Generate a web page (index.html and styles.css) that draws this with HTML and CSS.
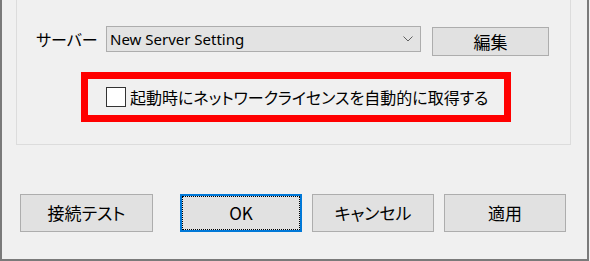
FILE: index.html
```html
<!DOCTYPE html>
<html>
<head>
    <title>ライセンス設定</title>
    <link rel="stylesheet" href="styles.css">
</head>
<body>
    <div class="dialog">
        <!-- server group (top edge is cut off in the capture) -->
        <div class="group">
            <div class="server-row">
                <span class="server-label">サーバー</span>
                <div class="combo">
                    <span class="combo-text">New Server Setting</span>
                    <svg class="combo-arrow" width="10" height="6" viewBox="0 0 10 6">
                        <polyline points="0.5,0.5 5,5 9.5,0.5" fill="none" stroke="#606060" stroke-width="1"/>
                    </svg>
                </div>
                <button type="button" class="btn btn-edit">編集</button>
            </div>

            <div class="highlight">
                <label class="check">
                    <span class="check-box"></span>
                    <span class="check-text">起動時にネットワークライセンスを自動的に取得する</span>
                </label>
            </div>
        </div>

        <!-- dialog buttons -->
        <div class="actions">
            <button type="button" class="btn btn-test">接続テスト</button>
            <button type="button" class="btn btn-ok">OK</button>
            <button type="button" class="btn">キャンセル</button>
            <button type="button" class="btn">適用</button>
        </div>
    </div>
</body>
</html>
```

FILE: styles.css
```css
body {
    margin: 0;
    background-color: #f0f0f0;
    font-family: "Noto Sans CJK JP", sans-serif;
    font-size: 16px;
    font-feature-settings: "palt";
    line-height: 22px;
    color: #000;
}

.dialog {
    width: 589px;
    height: 261px;
    box-sizing: border-box;
    border: 2px solid #7a7a7a;
    border-top: 0;
}

.group {
    width: 555px;
    height: 145px;
    margin-left: 14px;
    box-sizing: border-box;
    border: 1px solid #dcdcdc;
    border-top: 0;
}

.server-row {
    display: flex;
    align-items: flex-start;
    padding: 26px 0 0 19px;
}

.server-label {
    width: 60px;
    height: 26px;
    line-height: 26px;
    margin-right: 10px;
    white-space: nowrap;
}

.combo {
    width: 315px;
    height: 26px;
    box-sizing: border-box;
    border: 1px solid #adadad;
    background-color: #e3e3e3;
    display: flex;
    align-items: center;
    justify-content: space-between;
    padding: 0 7px 0 3px;
}

.combo-text {
    font-family: "Noto Sans", sans-serif;
    font-size: 15px;
    line-height: 24px;
}

.btn {
    width: 122px;
    height: 38px;
    box-sizing: border-box;
    border: 1px solid #adadad;
    background-color: #e1e1e1;
    font: inherit;
    font-size: 17px;
    font-feature-settings: "palt";
    line-height: 22px;
    color: #000;
    padding: 0;
}

.btn-edit {
    width: 117px;
    height: 29px;
    margin: 1px 0 0 11px;
}

.highlight {
    width: 430px;
    height: 50px;
    margin: 16px 0 0 64px;
    box-sizing: border-box;
    border: 7px solid #ff0000;
    display: flex;
    align-items: center;
    padding-left: 18px;
}

.check {
    display: flex;
    align-items: center;
}

.check-box {
    width: 20px;
    height: 20px;
    box-sizing: border-box;
    border: 1px solid #333;
    background-color: #fff;
    margin-right: 4px;
}

.check-text {
    white-space: nowrap;
}

.actions {
    display: flex;
    gap: 10px;
    margin-top: 49px;
    padding-left: 18px;
}

.btn-test {
    width: 133px;
    margin-right: 17px;
}

.btn-ok {
    border: 2px solid #0078d7;
    outline: 1px dotted #000;
    outline-offset: -3px;
}
```
